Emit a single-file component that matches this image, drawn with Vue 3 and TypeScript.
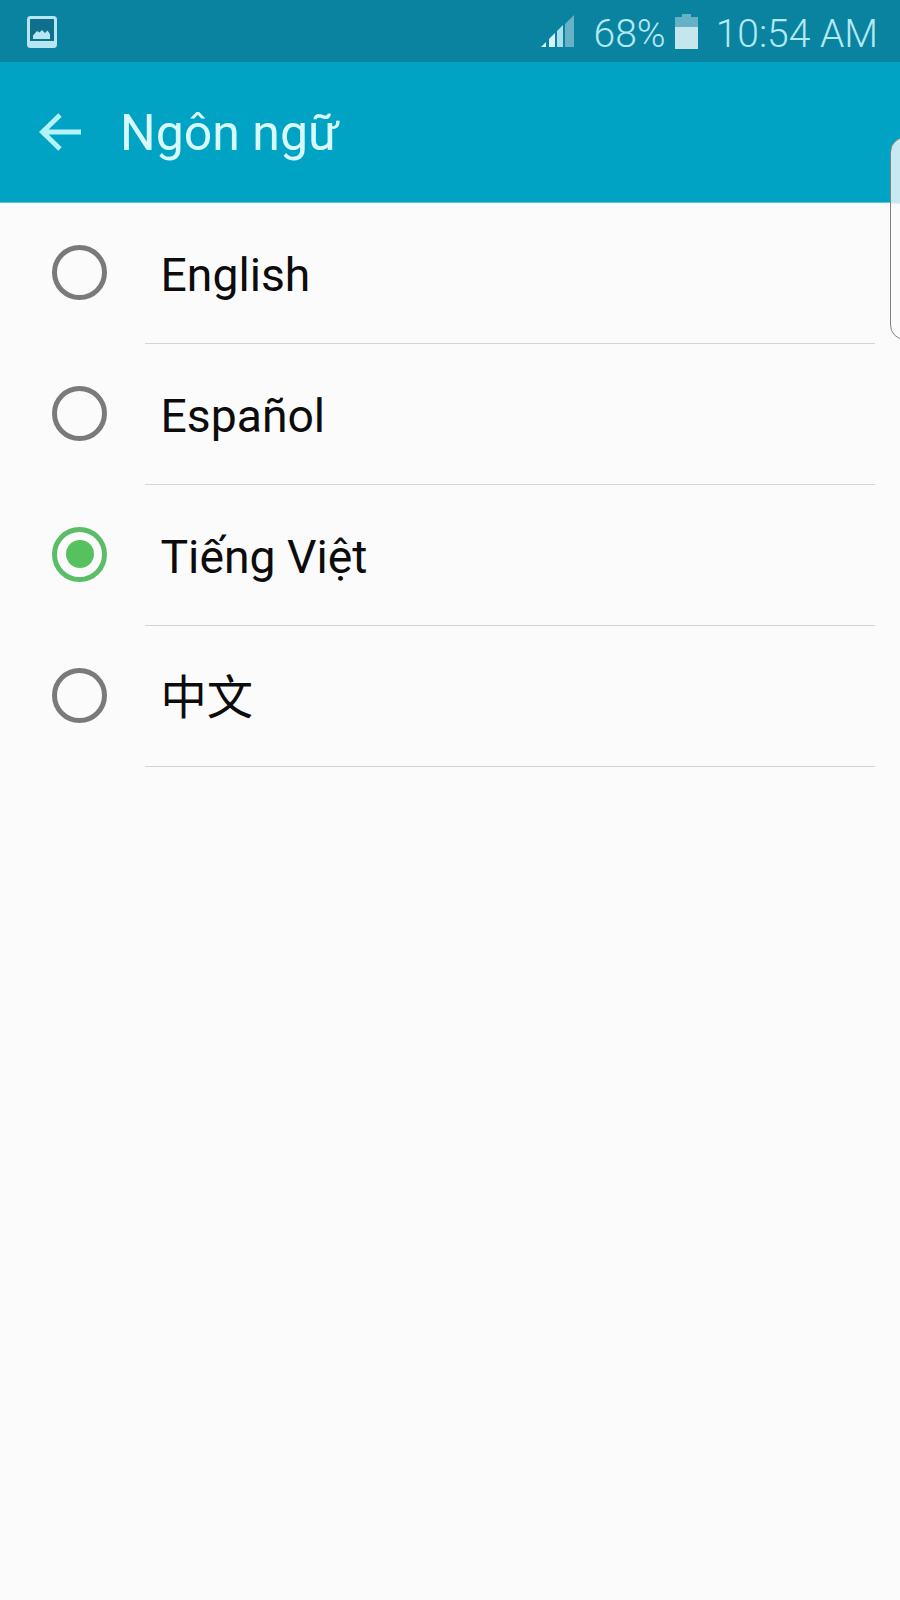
<script setup lang="ts">
const languages = [
  { label: 'English', selected: false },
  { label: 'Español', selected: false },
  { label: 'Tiếng Việt', selected: true },
  { label: '中文', selected: false }
]
</script>

<template>
  <div class="screen">
    <div class="status-bar">
      <svg class="picture-icon" width="30" height="32" viewBox="0 0 30 32">
        <rect x="1.5" y="1.5" width="27" height="29" rx="2" fill="#0f6f8d" stroke="#b5e6f2" stroke-width="3" />
        <rect x="1.5" y="25" width="27" height="5.5" fill="#b5e6f2" />
        <path d="M6 23 L6 19.5 L10 15 L12.5 16.5 L15 14 L18 17 L20.5 14.5 L23 18 L23 23 Z" fill="#b5e6f2" />
      </svg>
      <div class="status-right">
        <svg class="signal" width="33" height="33" viewBox="0 0 33 33">
          <path d="M0 32 L5 27 V32 Z" fill="#d5f3f8" />
          <path d="M8 32 V24 L14 18 V32 Z" fill="#d5f3f8" />
          <path d="M16 32 V16 L22 10 V32 Z" fill="#a9e0ec" />
          <path d="M24 32 V9 L33 0 V32 Z" fill="#67b3c5" />
        </svg>
        <span class="percent">68%</span>
        <svg class="battery" width="23" height="35" viewBox="0 0 23 35">
          <path d="M7 0 H16 V3 H23 V13 H0 V3 H7 Z" fill="#65b2c6" />
          <rect x="0" y="13" width="23" height="22" fill="#c6e6ee" />
        </svg>
        <span class="clock">10:54 AM</span>
      </div>
    </div>

    <header class="app-bar">
      <svg class="back" width="44" height="40" viewBox="0 0 44 40">
        <path d="M42 20 H4 M21 3 L3.5 20 L21 37" fill="none" stroke="#b3f4fb" stroke-width="5" />
      </svg>
      <h1 class="title">Ngôn ngữ</h1>
    </header>

    <main class="list">
      <div v-for="lang in languages" :key="lang.label" class="row">
        <div class="radio-cell">
          <span :class="['radio', { selected: lang.selected }]"></span>
        </div>
        <div class="label-cell">
          <span class="label">{{ lang.label }}</span>
        </div>
      </div>
    </main>

    <div class="edge-handle"></div>
  </div>
</template>

<style>
html,
body {
  margin: 0;
  background: #fbfbfb;
}
</style>

<style scoped>
.screen {
  position: relative;
  width: 900px;
  height: 1600px;
  overflow: hidden;
  background: #fbfbfb;
  font-family: Roboto, "Noto Sans CJK SC", sans-serif;
}

.status-bar {
  height: 62px;
  box-sizing: border-box;
  padding: 0 22px 0 27px;
  display: flex;
  align-items: center;
  justify-content: space-between;
  background: #0a83a1;
  color: #b3e9f3;
}

.status-right {
  display: flex;
  align-items: center;
}

.picture-icon {
  margin-top: 2px;
}

.signal {
  margin: 1px 20px 0 0;
}

.percent,
.clock {
  font-size: 39px;
  font-weight: 300;
  line-height: 62px;
  padding-top: 5px;
}

.battery {
  margin: 1px 18px 0 9px;
}

.app-bar {
  height: 141px;
  box-sizing: border-box;
  padding-left: 39px;
  display: flex;
  align-items: center;
  background: #00a3c4;
  border-bottom: 1px solid #5cc3da;
}

.back {
  margin-right: 37px;
}

.title {
  margin: 0;
  padding-top: 2px;
  font-size: 50px;
  font-weight: 400;
  color: #d6fafd;
}

.row {
  height: 141px;
  display: grid;
  grid-template-columns: 145px 1fr;
}

.radio-cell {
  padding-left: 52px;
  display: flex;
  align-items: center;
  padding-bottom: 3px;
}

.radio {
  width: 55px;
  height: 55px;
  box-sizing: border-box;
  border: 5px solid #7a7a7a;
  border-radius: 50%;
  display: flex;
  align-items: center;
  justify-content: center;
}

.radio.selected {
  border-color: #5bbd68;
}

.radio.selected::after {
  content: "";
  width: 28px;
  height: 28px;
  border-radius: 50%;
  background: #55c25f;
}

.label-cell {
  margin-right: 25px;
  padding-left: 15.5px;
  display: flex;
  align-items: center;
  border-bottom: 1px solid #d4d4d4;
}

.label {
  font-size: 46.3px;
  line-height: 54px;
  padding-top: 3px;
  color: #0c0c0c;
}

.edge-handle {
  position: absolute;
  top: 137px;
  right: -20px;
  width: 30px;
  height: 203px;
  box-sizing: border-box;
  border: 1.5px solid #808080;
  border-radius: 16px;
  background: linear-gradient(#c8e9f1 0, #c8e9f1 65px, #fbfbfb 66px);
}
</style>
